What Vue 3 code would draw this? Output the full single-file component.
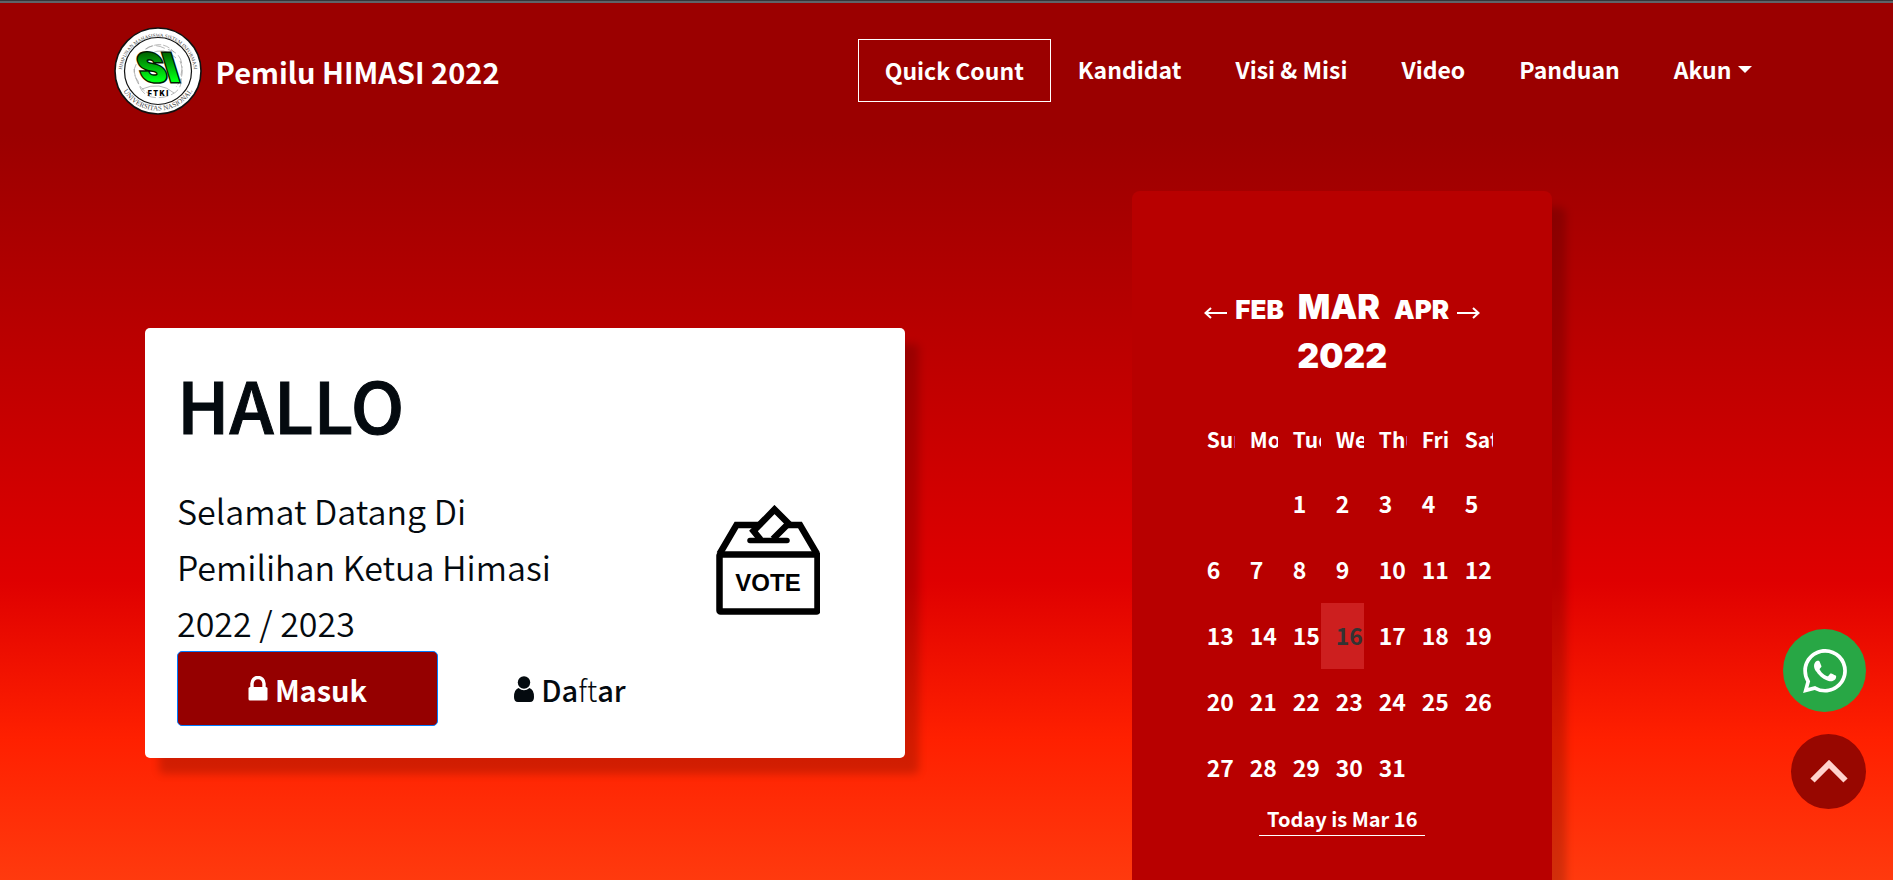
<script setup>
const links = [
  { label: 'Quick Count', boxed: true },
  { label: 'Kandidat' },
  { label: 'Visi & Misi' },
  { label: 'Video' },
  { label: 'Panduan' },
  { label: 'Akun', caret: true },
]
const weekdays = ['Sun', 'Mon', 'Tue', 'Wed', 'Thu', 'Fri', 'Sat']
const today = 16
const firstWeekday = 2
const weeks = Array.from({ length: 5 }, (_, w) =>
  Array.from({ length: 7 }, (_, d) => {
    const day = w * 7 + d - firstWeekday + 1
    return day >= 1 && day <= 31 ? day : null
  })
)
</script>

<template>
  <div class="page">
    <header class="navbar">
      <a class="brand" href="#">
        <svg class="logo" viewBox="0 0 88 88" aria-hidden="true">
          <defs>
            <linearGradient id="si" x1="0" y1="0" x2="0" y2="1">
              <stop offset="0.2" stop-color="#006400" />
              <stop offset="0.75" stop-color="#00ff14" />
            </linearGradient>
            <path id="arcTop" d="M8 46 A36 36 0 0 1 80 46" />
            <path id="arcBottom" d="M5 54 A40.500 40.500 0 0 0 83 54" />
          </defs>
          <circle cx="44" cy="44" r="43" fill="#fff" stroke="#111" stroke-width="1.6" />
          <circle cx="44" cy="44" r="33.5" fill="none" stroke="#111" stroke-width="1.2" />
          <g fill="none" stroke="#999" stroke-width="0.7">
            <path d="M24 32 Q34 12 52 22 Q72 26 67 48 Q70 66 50 70 Q28 74 24 54 Q14 42 30 28" stroke-dasharray="9 3" />
            <path d="M32 22 Q48 12 60 25 M66 34 Q72 48 62 60 M20 42 Q22 62 38 68" stroke-dasharray="7 2" />
            <path d="M28 62 Q46 54 60 66 M36 27 Q50 19 62 31" />
          </g>
          <text class="ring"><textPath href="#arcTop" startOffset="50%" text-anchor="middle">HIMPUNAN MAHASISWA SISTEM INFORMASI</textPath></text>
          <text class="ring ring-lg"><textPath href="#arcBottom" startOffset="50%" text-anchor="middle">UNIVERSITAS NASIONAL</textPath></text>
          <text class="si" x="12" y="55" transform="skewX(17)">SI</text>
          <text class="ftki" x="44" y="69" text-anchor="middle">F T K I</text>
        </svg>
        <span>Pemilu HIMASI 2022</span>
      </a>
      <nav class="links">
        <a v-for="l in links" :key="l.label" href="#" class="link" :class="{ boxed: l.boxed }">
          {{ l.label }}<i v-if="l.caret" class="caret"></i>
        </a>
      </nav>
    </header>

    <main class="hero">
      <section class="welcome">
        <div class="intro">
          <h1>HALLO</h1>
          <p>Selamat Datang Di<br />Pemilihan Ketua Himasi<br />2022 / 2023</p>
          <div class="actions">
            <button type="button" class="btn primary">
              <svg width="20" height="25" viewBox="0 0 20 25" aria-hidden="true">
                <path d="M4 12 V7.500 A6 6 0 0 1 16 7.500 V12" fill="none" stroke="currentColor" stroke-width="3.400" />
                <rect x="0.500" y="11" width="19" height="13.500" rx="1.600" fill="currentColor" />
              </svg>
              <span>Masuk</span>
            </button>
            <button type="button" class="btn plain">
              <svg width="20" height="26" viewBox="0 0 20 26" aria-hidden="true">
                <circle cx="10" cy="6.500" r="6.200" fill="currentColor" />
                <path d="M4.500 12 Q10 16.500 15.500 12 Q20 13.500 20 21 Q20 26 16 26 H4 Q0 26 0 21 Q0 13.500 4.500 12 Z" fill="currentColor" />
              </svg>
              <span>Da<span class="thin">ft</span>ar</span>
            </button>
          </div>
        </div>
        <svg class="vote" viewBox="0 0 104 110" role="img" aria-label="VOTE">
          <g fill="none" stroke="#000" stroke-width="6.500">
            <rect x="3.500" y="49.500" width="98" height="57" rx="1" stroke-linejoin="round" />
            <path d="M3.500 49 L20.500 20 H43 M72 20 H84 L101 49" />
            <path d="M44.500 34.500 L37.500 26 L58.500 4.500 L72.500 18.500 L57 34" />
            <path d="M34 35.500 H71" stroke-width="5.500" stroke-linecap="round" />
          </g>
          <text x="52" y="85.500" text-anchor="middle">VOTE</text>
        </svg>
      </section>

      <section class="calendar">
        <div class="months">
          <button type="button" class="step">
            <svg width="23" height="12" viewBox="0 0 23 12" aria-hidden="true"><path d="M23 6 H2 M7 1 L1.500 6 L7 11" /></svg>
            <span>FEB</span>
          </button>
          <h2>MAR</h2>
          <button type="button" class="step">
            <span>APR</span>
            <svg width="23" height="12" viewBox="0 0 23 12" aria-hidden="true"><path d="M0 6 H21 M16 1 L21.500 6 L16 11" /></svg>
          </button>
        </div>
        <div class="year">2022</div>
        <table>
          <thead>
            <tr><th v-for="d in weekdays" :key="d" scope="col">{{ d }}</th></tr>
          </thead>
          <tbody>
            <tr v-for="(week, i) in weeks" :key="i">
              <td v-for="(day, j) in week" :key="j" :class="{ today: day === today }">{{ day }}</td>
            </tr>
          </tbody>
        </table>
        <a class="now" href="#">Today is Mar 16</a>
      </section>
    </main>

    <div class="floating">
      <a class="wa" href="#" aria-label="WhatsApp">
        <svg width="44" height="44" viewBox="0 0 24 24" aria-hidden="true">
          <path d="M17.472 14.382c-.297-.149-1.758-.867-2.030-.967-.273-.099-.471-.148-.670.150-.197.297-.767.966-.940 1.164-.173.199-.347.223-.644.075-.297-.150-1.255-.463-2.390-1.475-.883-.788-1.480-1.761-1.653-2.059-.173-.297-.018-.458.130-.606.134-.133.298-.347.446-.520.149-.174.198-.298.298-.497.099-.198.050-.371-.025-.520-.075-.149-.669-1.612-.916-2.207-.242-.579-.487-.500-.669-.510-.173-.008-.371-.010-.570-.010-.198 0-.520.074-.792.372-.272.297-1.040 1.016-1.040 2.479 0 1.462 1.065 2.875 1.213 3.074.149.198 2.096 3.200 5.077 4.487.709.306 1.262.489 1.694.625.712.227 1.360.195 1.871.118.571-.085 1.758-.719 2.006-1.413.248-.694.248-1.289.173-1.413-.074-.124-.272-.198-.570-.347z" />
          <path fill-rule="evenodd" d="M12.050 0C5.495 0 .160 5.335.157 11.892c0 2.096.547 4.142 1.588 5.945L.057 24l6.305-1.654a11.882 11.882 0 005.683 1.448h.005c6.554 0 11.890-5.335 11.893-11.893A11.821 11.821 0 0012.050 0zM12.045 21.785h-.004a9.870 9.870 0 01-5.031-1.378l-.361-.214-3.741.982.998-3.648-.235-.374a9.860 9.860 0 01-1.510-5.260c.001-5.450 4.436-9.884 9.888-9.884 5.450 0 9.880 4.440 9.880 9.890-.003 5.450-4.437 9.886-9.884 9.886z" />
        </svg>
      </a>
      <a class="up" href="#" aria-label="Kembali ke atas">
        <svg width="38" height="24" viewBox="0 0 38 24" aria-hidden="true"><path d="M2.500 20.500 L19 4 L35.500 20.500" /></svg>
      </a>
    </div>
  </div>
</template>

<style>
body { overflow: hidden; }
</style>

<style scoped>
* { box-sizing: border-box; }
.page {
  height: 100vh;
  overflow: hidden;
  color: #fff;
  font-family: "Noto Sans CJK SC", "Noto Sans", sans-serif;
  font-weight: 700;
  border-top: 1px solid #35363a;
  box-shadow: inset 0 2px #5f6368;
  background: linear-gradient(#9b0000 0, #9b0000 15%, #df0000 66%, #ff2000 84%, #ff3a0e 100%);
}
a { color: inherit; text-decoration: none; }
button { font: inherit; color: inherit; background: none; border: 0; padding: 0; cursor: pointer; }
.navbar {
  display: flex;
  justify-content: space-between;
  align-items: flex-start;
  padding: 26px 6% 0;
}
.brand { display: flex; align-items: center; gap: 14px; font-size: 29px; line-height: 88px; white-space: nowrap; }
.logo { width: 88px; height: 88px; display: block; }
.ring { font: 5px "Liberation Serif", serif; fill: #444; }
.ring-lg { font-size: 7px; }
.si { font: 900 40px Inter, sans-serif; fill: url(#si); stroke: #001a00; stroke-width: 3px; paint-order: stroke; }
.ftki { font: 900 7px Inter, sans-serif; fill: #000; }
.links { display: flex; align-items: flex-start; padding-top: 12px; }
.link { padding: 0 27px; line-height: 60px; font-size: 23px; white-space: nowrap; }
.boxed { border: 1px solid #fff; padding: 0 26px; line-height: 61px; }
.caret {
  display: inline-block;
  margin-left: 7px;
  vertical-align: 6px;
  border: 7px solid transparent;
  border-top-color: #fff;
  border-bottom: 0;
}
.hero { display: flex; align-items: flex-start; padding: 76px 0 0 145px; }
.welcome {
  flex: 1;
  margin-top: 137px;
  padding: 32px;
  display: flex;
  justify-content: space-between;
  background: #fff;
  color: #040a0f;
  border-radius: 5px;
  box-shadow: 14px 16px 8px rgba(0, 0, 0, 0.18);
}
h1 { margin: 0 0 37px; font-size: 71px; line-height: 86px; font-weight: 500; -webkit-text-stroke: 1px #040a0f; }
.intro p { margin: 0; font-size: 34px; line-height: 56px; font-weight: 350; white-space: nowrap; }
.actions { display: flex; gap: 28px; }
.btn {
  width: 261px;
  height: 75px;
  display: flex;
  align-items: center;
  justify-content: center;
  gap: 7px;
  font-size: 29px;
}
.primary { background: #950000; color: #fff; border: 1px solid #007bff; border-radius: 5px; }
.plain { width: 208px; font-weight: 500; }
.thin { font-weight: 300; }
.vote { width: 104px; height: 110px; margin: 145px 53px 0 0; }
.vote text { font: bold 24px "Liberation Sans", sans-serif; }
.calendar {
  flex: 0 0 420px;
  margin: 0 18vw 0 12vw;
  padding: 91px 59px 91px;
  background: #b80000;
  border-radius: 8px;
  box-shadow: 14px 16px 8px rgba(0, 0, 0, 0.18);
  display: flex;
  flex-direction: column;
  align-items: center;
}
.months, .year, .months h2 { font-family: Inter, sans-serif; font-weight: 900; font-size: 34px; line-height: 49px; }
.months { display: flex; align-items: baseline; justify-content: center; gap: 14px; }
.months h2 { margin: 0; }
.step { display: flex; align-items: baseline; gap: 8px; font-size: 26px; line-height: 32px; }
.step svg { fill: none; stroke: #fff; stroke-width: 2; }
table { width: 301px; table-layout: fixed; border-collapse: collapse; margin-top: 25px; }
th, td { height: 66px; padding: 0 0 2px 15px; text-align: left; overflow: hidden; white-space: nowrap; font-size: 23px; line-height: 32px; font-weight: 700; }
th { padding: 2px 0 0 15px; font-size: 21px; }
.today { background: #cd1f1f; color: #333; }
.now { margin-top: 2px; padding: 0 8px; border-bottom: 1px solid #fff; font-size: 20px; line-height: 32px; }
.floating {
  position: fixed;
  right: 27px;
  bottom: 71px;
  display: flex;
  flex-direction: column;
  align-items: flex-end;
  gap: 22px;
}
.wa, .up { display: flex; align-items: center; justify-content: center; border-radius: 50%; }
.wa { width: 83px; height: 83px; background: #28a745; }
.wa svg { fill: #fff; }
.up { width: 75px; height: 75px; background: #980700; }
.up svg { fill: none; stroke: #ffd2cc; stroke-width: 6; }
</style>
